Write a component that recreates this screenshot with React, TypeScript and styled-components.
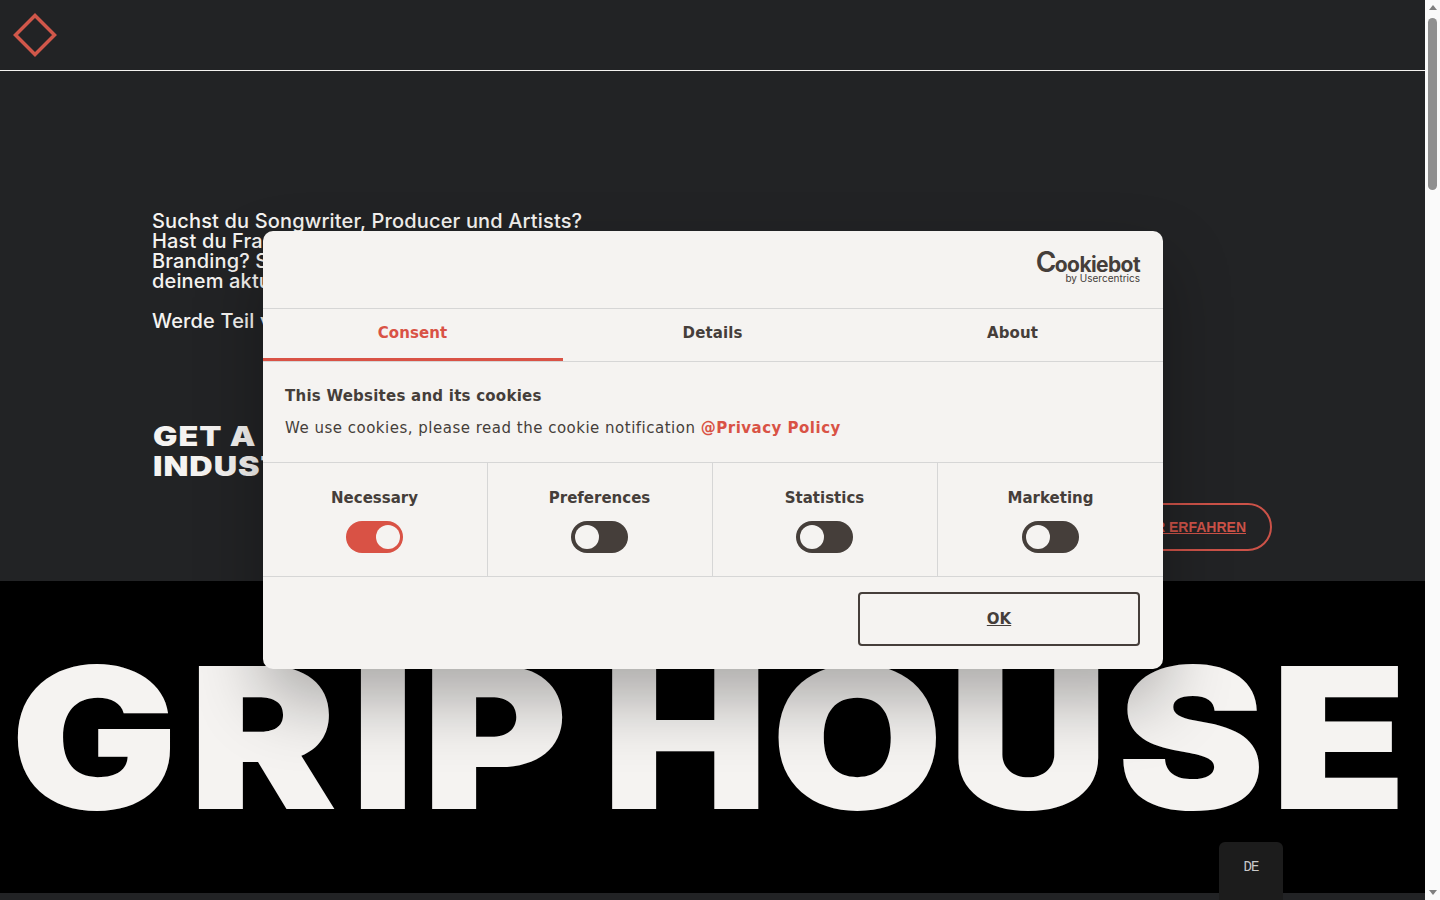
import React from 'react';
import styled, { createGlobalStyle } from 'styled-components';

const GlobalStyle = createGlobalStyle`
  html, body {
    margin: 0;
    padding: 0;
    height: 900px;
    overflow: hidden;
    background: #000;
  }
  * {
    box-sizing: border-box;
  }
`;

const Shell = styled.div`
  display: flex;
  width: 1440px;
  height: 900px;
  overflow: hidden;
  position: relative;
`;

const Page = styled.main`
  flex: 1;
  display: flex;
  flex-direction: column;
  min-width: 0;
  position: relative;
`;

const Header = styled.header`
  display: flex;
  align-items: center;
  height: 71px;
  padding-left: 12px;
  background: #222325;
  border-bottom: 1px solid #f5f3f1;
`;

const Hero = styled.section`
  height: 510px;
  padding: 140px 153px 0 152px;
  background: #222325;
  color: #f5f3f1;
`;

const Intro = styled.p`
  margin: 0;
  width: 470px;
  font-family: Inter, "Liberation Sans", sans-serif;
  font-size: 20px;
  line-height: 20px;
  font-weight: 500;
  letter-spacing: 0.15px;
  white-space: pre-line;
`;

const CtaRow = styled.div`
  display: flex;
  justify-content: space-between;
  align-items: flex-start;
  margin-top: 91px;
`;

const Claim = styled.h2`
  margin: 0 0 0 1px;
  font-family: Inter, "Liberation Sans", sans-serif;
  font-size: 27px;
  line-height: 30px;
  font-weight: 900;
  letter-spacing: 0.8px;
  text-transform: uppercase;
  transform: scaleX(1.2);
  transform-origin: left center;
`;

const CtaButton = styled.a`
  display: flex;
  align-items: center;
  height: 48px;
  margin-top: 81px;
  padding: 0 24px;
  border: 2px solid #cc5248;
  border-radius: 24px;
  color: #cc5248;
  font-family: "Liberation Sans", Arial, sans-serif;
  font-size: 14px;
  font-weight: 700;
  text-decoration: underline;
`;

const Wordmark = styled.section`
  height: 312px;
  background: #000;
  display: flex;
  justify-content: center;
  padding-top: 58px;
`;

const WordmarkText = styled.h1`
  margin: 0;
  color: #f5f3f1;
  font-family: Inter, "Liberation Sans", sans-serif;
  font-size: 197px;
  line-height: 197px;
  font-weight: 900;
  letter-spacing: 6.5px;
  word-spacing: -16px;
  white-space: pre;
  transform: scaleX(1.13);
`;

const Letter = styled.span<{ $kern: number }>`
  margin-left: ${(p) => p.$kern}px;
`;

const FooterStrip = styled.div`
  height: 7px;
  background: #222325;
`;

const LangTab = styled.button`
  position: absolute;
  right: 142px;
  bottom: 0;
  width: 64px;
  height: 58px;
  padding: 0 0 8px;
  border: 0;
  border-radius: 6px 6px 0 0;
  background: #1c1c1c;
  color: #c9c9c9;
  font-family: "Liberation Mono", monospace;
  font-size: 14px;
  letter-spacing: -1px;
`;

const Scrollbar = styled.div`
  position: relative;
  flex: 0 0 15px;
  display: flex;
  flex-direction: column;
  align-items: center;
  justify-content: space-between;
  padding: 5px 0;
  background: #fafafa;
`;

const ScrollArrow = styled.span<{ $down?: boolean }>`
  width: 0;
  height: 0;
  border-left: 4px solid transparent;
  border-right: 4px solid transparent;
  ${(p) =>
    p.$down ? 'border-top: 5px solid #7f7f7f;' : 'border-bottom: 5px solid #7f7f7f;'}
`;

const ScrollThumb = styled.div`
  position: absolute;
  top: 18px;
  left: 3px;
  width: 9px;
  height: 172px;
  border-radius: 5px;
  background: #8f8f8f;
`;

const Dialog = styled.div`
  position: absolute;
  left: 263px;
  top: 231px;
  width: 900px;
  height: 438px;
  display: flex;
  flex-direction: column;
  border-radius: 10px;
  background: #f5f3f1;
  color: #453e3a;
  box-shadow: 0 32px 68px rgba(0, 0, 0, 0.3);
  font-family: "DejaVu Sans", Verdana, sans-serif;
`;

const LogoBar = styled.div`
  height: 78px;
  display: flex;
  justify-content: flex-end;
  padding: 23px 23px 0 0;
  border-bottom: 1px solid #d6d6d6;
`;

const Logo = styled.div`
  display: flex;
  flex-direction: column;
  align-items: flex-end;
  color: #453e3a;
  font-family: Inter, sans-serif;
`;

const LogoName = styled.span`
  font-size: 21px;
  line-height: 22px;
  font-weight: 700;
  letter-spacing: -0.6px;
`;

const LogoInitial = styled.span`
  font-size: 28px;
  line-height: 0;
  font-weight: 600;
  letter-spacing: -1.5px;
`;

const LogoBy = styled.span`
  font-size: 10px;
  line-height: 10px;
  margin-top: -3px;
`;

const Tabs = styled.nav`
  display: grid;
  grid-template-columns: repeat(3, 300px);
  height: 53px;
  border-bottom: 1px solid #d6d6d6;
`;

const Tab = styled.div<{ $active?: boolean }>`
  display: flex;
  justify-content: center;
  padding: 14px 1px 0 0;
  height: 52px;
  font-size: 15px;
  line-height: 20px;
  font-weight: 700;
  letter-spacing: 0.1px;
  color: ${(p) => (p.$active ? '#d95245' : '#453e3a')};
  border-bottom: 3px solid ${(p) => (p.$active ? '#d95245' : 'transparent')};
`;

const Body = styled.div`
  height: 101px;
  padding: 24px 22px 0;
  border-bottom: 1px solid #d6d6d6;
`;

const BodyTitle = styled.h3`
  margin: 0 0 12px;
  font-size: 15px;
  line-height: 20px;
  font-weight: 700;
  letter-spacing: 0.24px;
`;

const BodyText = styled.p`
  margin: 0;
  font-size: 15px;
  line-height: 20px;
  letter-spacing: 0.5px;
`;

const PolicyLink = styled.a`
  color: #d95245;
  font-weight: 700;
`;

const Toggles = styled.div`
  display: grid;
  grid-template-columns: repeat(4, 225px);
  height: 114px;
  border-bottom: 1px solid #d6d6d6;
`;

const ToggleCell = styled.div`
  display: flex;
  flex-direction: column;
  align-items: center;
  padding: 25px 1px 0 0;
  gap: 13px;
  border-right: 1px solid #d6d6d6;
  &:last-child {
    padding-right: 0;
    border-right: 0;
  }
`;

const ToggleLabel = styled.span`
  font-size: 15px;
  line-height: 20px;
  font-weight: 700;
`;

const Toggle = styled.span<{ $on?: boolean }>`
  display: flex;
  justify-content: ${(p) => (p.$on ? 'flex-end' : 'flex-start')};
  align-items: center;
  width: 57px;
  height: 32px;
  padding: 0 3px 0 4px;
  border-radius: 16px;
  background: ${(p) => (p.$on ? '#d95245' : '#453e3a')};
`;

const Knob = styled.span`
  width: 24px;
  height: 24px;
  border-radius: 50%;
  background: #f5f3f1;
`;

const Actions = styled.div`
  display: flex;
  justify-content: flex-end;
  padding: 15px 23px 0 0;
`;

const OkButton = styled.button`
  width: 282px;
  height: 54px;
  border: 2px solid #453e3a;
  border-radius: 4px;
  background: transparent;
  color: #453e3a;
  font-family: "DejaVu Sans", Verdana, sans-serif;
  font-size: 15px;
  font-weight: 700;
  text-decoration: underline;
`;

const categories = [
  { name: 'Necessary', on: true },
  { name: 'Preferences', on: false },
  { name: 'Statistics', on: false },
  { name: 'Marketing', on: false },
];

const wordmark: [string, number][] = [
  ['G', 0],
  ['R', 2.7],
  ['I', 5.3],
  ['P', -0.9],
  [' ', 0],
  ['H', -6.2],
  ['O', -4.4],
  ['U', -2.7],
  ['S', 0.9],
  ['E', -1.8],
];

export default function App() {
  return (
    <Shell>
      <GlobalStyle />
      <Page>
        <Header>
          <svg width="46" height="46" viewBox="0 0 46 46" fill="none">
            <path d="M23 3.5 L42.5 23 L23 42.5 L3.5 23 Z" stroke="#d0574a" strokeWidth="3.5" />
          </svg>
        </Header>
        <Hero>
          <Intro>
            {'Suchst du Songwriter, Producer und Artists?\nHast du Fragen zu Musik und\nBranding? Sprich mit uns über\ndeinem aktuellen Projekt.\n\nWerde Teil von Grip House.'}
          </Intro>
          <CtaRow>
            <Claim>
              Get a seat in the
              <br />
              industry
            </Claim>
            <CtaButton>MEHR ERFAHREN</CtaButton>
          </CtaRow>
        </Hero>
        <Wordmark>
          <WordmarkText>
            {wordmark.map(([ch, kern], i) => (
              <Letter key={i} $kern={kern}>
                {ch}
              </Letter>
            ))}
          </WordmarkText>
        </Wordmark>
        <FooterStrip />
        <LangTab>DE</LangTab>
      </Page>
      <Scrollbar>
        <ScrollArrow />
        <ScrollThumb />
        <ScrollArrow $down />
      </Scrollbar>
      <Dialog>
        <LogoBar>
          <Logo>
            <LogoName>
              <LogoInitial>C</LogoInitial>ookiebot
            </LogoName>
            <LogoBy>by Usercentrics</LogoBy>
          </Logo>
        </LogoBar>
        <Tabs>
          <Tab $active>Consent</Tab>
          <Tab>Details</Tab>
          <Tab>About</Tab>
        </Tabs>
        <Body>
          <BodyTitle>This Websites and its cookies</BodyTitle>
          <BodyText>
            We use cookies, please read the cookie notification <PolicyLink>@Privacy Policy</PolicyLink>
          </BodyText>
        </Body>
        <Toggles>
          {categories.map((c) => (
            <ToggleCell key={c.name}>
              <ToggleLabel>{c.name}</ToggleLabel>
              <Toggle $on={c.on}>
                <Knob />
              </Toggle>
            </ToggleCell>
          ))}
        </Toggles>
        <Actions>
          <OkButton>OK</OkButton>
        </Actions>
      </Dialog>
    </Shell>
  );
}
